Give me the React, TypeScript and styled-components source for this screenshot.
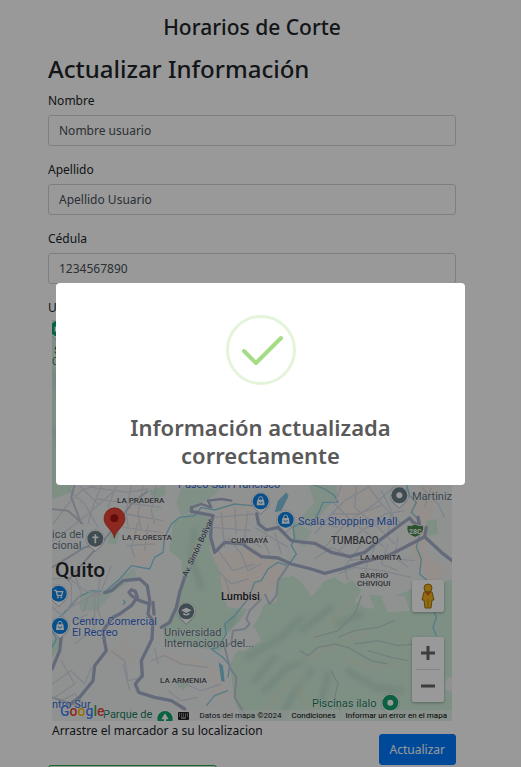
import React from 'react';
import styled, { createGlobalStyle } from 'styled-components';

const GlobalStyle = createGlobalStyle`
  *, *::before, *::after { box-sizing: border-box; }
  body {
    margin: 0;
    overflow: hidden;
    background: #fff;
    color: #212529;
    font-family: 'Noto Sans', 'Open Sans', sans-serif;
    font-size: 12px;
    line-height: 20px;
  }
`;

const Page = styled.main`
  height: 100vh;
  overflow: hidden;
  padding: 12px 66px 0 48px;
`;

const SiteTitle = styled.h1`
  margin: 0;
  font-size: 21px;
  font-weight: 500;
  line-height: 30px;
  text-align: center;
`;

const FormTitle = styled.h2`
  margin: 11px 0 6px;
  font-size: 24px;
  font-weight: 500;
  line-height: 32px;
`;

const Field = styled.div`
  display: flex;
  flex-direction: column;
  gap: 4px;
  margin-bottom: 14px;
`;

const TextInput = styled.input`
  width: 100%;
  height: 31px;
  padding: 4px 10px;
  border: 1px solid #ced4da;
  border-radius: 3px;
  background: #fff;
  color: #495057;
  font: inherit;
`;

const MapBlock = styled.section`
  display: flex;
  flex-direction: column;
  gap: 2px;
`;

const MapFrame = styled.div`
  position: relative;
  height: 401px;
  margin: 0 4px;
  overflow: hidden;
  background: #f3f4f5;
  font-family: Roboto, sans-serif;
`;

const MapArt = styled.svg`
  display: block;
  width: 100%;
  height: 100%;
`;

type Tone = 'area' | 'city' | 'shop' | 'place' | 'park' | 'road';
const tones: Record<Tone, string> = {
  area: '#4b4f55',
  city: '#26282c',
  shop: '#3068cf',
  place: '#5c7480',
  park: '#137a55',
  road: '#4d5870',
};

const MapLabel = styled.span<{ $x: number; $y: number; $size: number; $tone: Tone; $bold?: boolean; $angle?: number }>`
  position: absolute;
  left: ${(p) => p.$x}px;
  top: ${(p) => p.$y}px;
  color: ${(p) => tones[p.$tone]};
  font-size: ${(p) => p.$size}px;
  font-weight: ${(p) => (p.$bold ? 500 : 400)};
  line-height: 12px;
  margin-top: -6px;
  white-space: nowrap;
  text-shadow: 0 0 1px #fff, 0 0 2px #fff;
  ${(p) => (p.$angle ? `transform: rotate(${p.$angle}deg);` : '')}
`;

const MapControls = styled.div`
  position: absolute;
  right: 8px;
  bottom: 19px;
  display: flex;
  flex-direction: column;
  gap: 25px;
`;

const ControlGroup = styled.div`
  display: flex;
  flex-direction: column;
  width: 32px;
  border-radius: 2px;
  background: #fff;
  box-shadow: 0 1px 3px rgba(0, 0, 0, 0.3);
`;

const MapButton = styled.button`
  display: flex;
  align-items: center;
  justify-content: center;
  height: 32px;
  padding: 0;
  border: 0;
  background: none;
`;

const Divider = styled.hr`
  width: 24px;
  height: 1px;
  margin: 0 auto;
  border: 0;
  background: #ddd;
`;

const GoogleLogo = styled.div`
  position: absolute;
  left: 8px;
  bottom: 0;
  font-size: 14px;
  font-weight: 500;
  line-height: 20px;
  text-shadow: 0 0 1px #fff, 0 0 2px #fff;
`;

const Letter = styled.span<{ $color: string }>`
  color: ${(p) => p.$color};
`;

const Attribution = styled.div`
  position: absolute;
  right: 0;
  bottom: 0;
  display: flex;
  align-items: center;
  height: 11px;
  padding: 0 5px 0 1px;
  gap: 10px;
  background: rgba(245, 245, 245, 0.5);
  font-size: 8px;
  line-height: 11px;
  white-space: nowrap;
`;

const AttributionLink = styled.a`
  color: #000;
  text-decoration: none;
`;

const KeyboardButton = styled.button`
  display: flex;
  padding: 0;
  border: 0;
  background: none;
`;

const FormFooter = styled.div`
  display: flex;
  align-items: flex-start;
  justify-content: space-between;
  padding-left: 4px;
`;

const SubmitButton = styled.button`
  height: 31px;
  margin-top: 13px;
  padding: 0 10px;
  border: 1px solid #007bff;
  border-radius: 3px;
  background: #007bff;
  color: #fff;
  font: inherit;
`;

const OutlineButton = styled.button`
  display: block;
  width: 169px;
  height: 31px;
  border: 1px solid #28a745;
  border-radius: 3px;
  background: transparent;
`;

const Backdrop = styled.div`
  position: fixed;
  inset: 0 1px 0 0;
  display: flex;
  align-items: center;
  justify-content: center;
  padding: 0 56px;
  background: rgba(0, 0, 0, 0.4);
`;

const Dialog = styled.div`
  display: flex;
  flex: 1;
  flex-direction: column;
  align-items: center;
  max-width: 478px;
  padding: 32px 20px 16px;
  border-radius: 4px;
  background: #fff;
`;

const SuccessIcon = styled.svg`
  width: 70px;
  height: 70px;
`;

const DialogTitle = styled.h2`
  margin: 28px 0 0;
  max-width: 300px;
  color: #595959;
  font-size: 22px;
  font-weight: 600;
  line-height: 28px;
  text-align: center;
`;

const labels: { t: string; x: number; y: number; s: number; tone: Tone; bold?: boolean; angle?: number }[] = [
  { t: 'S', x: 2, y: 31, s: 11, tone: 'park', bold: true },
  { t: 'C', x: 0, y: 42, s: 10, tone: 'park' },
  { t: 'Paseo San Francisco', x: 126, y: 165, s: 11, tone: 'shop' },
  { t: 'LA PRADERA', x: 65, y: 181, s: 8, tone: 'area', bold: true },
  { t: 'LA FLORESTA', x: 70, y: 218, s: 8, tone: 'area', bold: true },
  { t: 'ica del', x: 0, y: 215, s: 11, tone: 'place' },
  { t: 'cional', x: 0, y: 226, s: 11, tone: 'place' },
  { t: 'Quito', x: 3, y: 250, s: 21, tone: 'city', bold: true },
  { t: 'Centro Comercial', x: 20, y: 302, s: 11, tone: 'shop' },
  { t: 'El Recreo', x: 20, y: 313, s: 11, tone: 'shop' },
  { t: 'Universidad', x: 112, y: 313, s: 11, tone: 'place' },
  { t: 'Internacional del...', x: 112, y: 324, s: 11, tone: 'place' },
  { t: 'LA ARMENIA', x: 108, y: 361, s: 8, tone: 'area', bold: true },
  { t: 'ntro Sur', x: 0, y: 385, s: 11, tone: 'shop' },
  { t: 'Parque de', x: 51, y: 395, s: 11, tone: 'park' },
  { t: 'Lumbisi', x: 169, y: 277, s: 11, tone: 'city', bold: true },
  { t: 'CUMBAYÁ', x: 179, y: 221, s: 8, tone: 'area', bold: true },
  { t: 'Av. Simón Bolívar', x: 115, y: 228, s: 8, tone: 'road', bold: true, angle: -65 },
  { t: 'Martiniz', x: 360, y: 177, s: 11, tone: 'place' },
  { t: 'Scala Shopping Mall', x: 246, y: 202, s: 11, tone: 'shop' },
  { t: 'TUMBACO', x: 279, y: 221, s: 10, tone: 'area', bold: true },
  { t: 'LA MORITA', x: 308, y: 238, s: 8, tone: 'area', bold: true },
  { t: 'BARRIO', x: 308, y: 256, s: 8, tone: 'area', bold: true },
  { t: 'CHIVIQUI', x: 305, y: 264, s: 8, tone: 'area', bold: true },
  { t: 'Piscinas ilalo', x: 260, y: 384, s: 11, tone: 'park' },
];

const Pin = ({ x, y, color, children }: { x: number; y: number; color: string; children?: React.ReactNode }) => (
  <g transform={`translate(${x} ${y})`}>
    <path d="M-29 0A29 29 0 1 1 29 0C29 18 12 26 0 40C-12 26 -29 18 -29 0Z" fill="#8d9aa2" opacity=".45" />
    <path d="M-27 -1A27 27 0 1 1 27 -1C27 16 10 24 0 36C-10 24 -27 16 -27 -1Z" fill="#fff" />
    <circle r="24" cy="-1" fill={color} />
    {children}
  </g>
);

const Bag = () => (
  <g>
    <path d="M-10 -6H10L12 11H-12Z" fill="#fff" />
    <path d="M-6 -5V-9A6 6 0 0 1 6 -9V-5" fill="none" stroke="#fff" strokeWidth="3" />
    <path d="M-5 0A5 5 0 0 0 5 0" fill="none" stroke="#0a84e8" strokeWidth="2.5" />
  </g>
);

const MapDrawing = () => (
  <MapArt viewBox="12 -492 1200 1203" preserveAspectRatio="xMinYMin slice" aria-hidden="true">
    <defs>
      <filter id="relief" x="-20%" y="-20%" width="140%" height="140%">
        <feGaussianBlur stdDeviation="8" />
      </filter>
    </defs>
    <rect x="12" y="-492" width="1200" height="1203" fill="#f1f3f4" />

    {/* built-up ground */}
    <g fill="#f8eee8">
      <path d="M240 70L290 60 320 100 360 90 350 170 300 240 250 245 260 190 230 130Z" opacity=".7" />
      <path d="M500 210L620 190 700 240 690 290 640 350 560 370 520 330Z" />
      <path d="M510 60L600 50 620 100 570 140 510 130Z" opacity=".7" />
      <path d="M880 5L990 10 1000 80 930 130 860 100Z" opacity=".6" />
      <path d="M1080 60L1130 0 1170 0 1150 120 1130 210 1200 260 1150 300 1100 230Z" />
      <path d="M350 505L440 520 520 560 540 660 500 640 470 560 380 540Z" opacity=".6" />
      <path d="M180 500L230 460 270 520 240 560Z" opacity=".4" />
    </g>

    {/* vegetation */}
    <g fill="#d2efdd">
      <path d="M12 -492H70V25L12 45Z" />
      <path d="M375 115L440 80 488 105 486 200 515 260 524 340 540 370 600 375 575 410 535 450 520 500 440 490 350 470 345 435 375 380 405 300 400 230 365 200Z" />
      <path d="M545 540L585 470 630 405 650 360 685 355 690 285 735 275 765 300 790 340 830 290 860 280 890 300 915 290 950 330 1030 340 1080 320 1120 300 1150 310 1212 285V711H585L560 650Z" />
      <path d="M400 10L520 0 510 25 440 75 400 100 385 60Z" opacity=".8" />
      <path d="M300 20L350 5 355 30 320 50Z" />
      <path d="M780 0L865 5 870 40 830 80 790 125 760 100 800 55Z" opacity=".8" />
      <path d="M735 110L790 140 770 190 735 170Z" opacity=".7" />
      <path d="M95 330L165 320 240 265 260 250 265 280 190 330 150 380 95 380Z" opacity=".7" />
      <path d="M12 470L35 455 28 500 12 520Z" />
      <path d="M185 142L215 145 205 180 180 178Z" />
      <path d="M385 600L405 585 425 600 405 620Z" />
      <path d="M1135 110L1165 105 1170 150 1140 155Z" />
    </g>
    <g fill="#f1f3f4">
      <path d="M940 320L965 335 980 375 950 370 920 350Z" />
      <path d="M1000 340L1070 335 1085 380 1020 385Z" />
      <path d="M545 440L620 430 640 470 590 500 555 500Z" />
      <path d="M1195 585L1212 580V625L1190 615Z" />
    </g>
    <g filter="url(#relief)" fill="none" strokeLinecap="round">
      <g stroke="#b4d8c5" strokeWidth="16" opacity=".6">
        <path d="M18 -330L40 -250M20 -160L50 -90M600 520L700 460 760 400M650 620L720 550 770 530M790 560L730 640 700 700M840 570L820 650M760 440L850 370M620 590L680 520" />
        <path d="M900 560L980 610 1060 620M870 420L940 390M440 140L430 220 460 310M560 400L540 430" />
      </g>
      <g stroke="#dcebd2" strokeWidth="14" opacity=".8">
        <path d="M20 -400L50 -300M800 460L860 410 910 340M760 530L830 500 880 480 960 440M750 570L680 640 640 700M770 570L760 640 800 690M880 520L960 550 1040 540M440 180L450 240M1020 450L1120 480" />
      </g>
    </g>

    {/* water */}
    <g fill="none" stroke="#8ccfe0" strokeWidth="4" strokeLinejoin="round">
      <path d="M12 490L25 465 12 440M35 400L60 375 90 340 130 320 160 322M175 320L215 285 250 245 305 255 320 220 345 205 350 160 370 120 395 100 440 95 460 70 500 78 560 60 610 65 640 40" />
      <path d="M790 0L830 15 860 35 870 55 825 55 815 80 790 125 760 115 735 130 740 160 730 185 745 210 720 245 690 235 660 255 640 290 620 295 600 345 560 395 530 420 535 450 510 490 490 495 525 520 545 545 540 580" />
      <path d="M1075 0L1085 35 1105 55 1090 85 1110 105M1115 150L1105 190 1120 225 1115 270 1150 300 1155 375 1165 400 1155 430 1165 455" />
      <path d="M475 665L500 635 540 620M225 348L232 355 225 362" />
    </g>
    <path d="M715 25L722 35 700 80 680 85 690 50Z" fill="#80c7e0" />
    <path d="M512 535L525 545 530 595 520 590Z" fill="#80c7e0" />

    {/* minor streets */}
    <g fill="none" stroke="#d7dde6" strokeWidth="4" strokeLinejoin="round">
      <path d="M15 120L60 60 100 20 140 5M12 170L70 130 120 90 200 20M60 15L110 60 150 130M95 5L150 60M130 10L240 25 300 15M145 45L260 60 340 70M160 5L130 80 120 120M205 5L180 70M250 5L235 80 240 130M285 5L270 90 280 140M325 5L310 80 320 120M235 90L345 110M225 130L340 145M235 185L320 180M270 115L250 190 260 220M300 120L290 200" />
      <path d="M500 100L620 90M495 130L610 140M520 85L530 190M560 70L565 150M600 80L590 160 640 190M620 130L720 190M510 200L555 260 620 240M540 160L580 210 600 260 640 240M640 155L665 210M680 145L700 210M510 260L550 300 600 285M530 280L545 330" />
      <path d="M800 150L850 90 890 50 960 10M830 190L890 120 980 60 1040 5M860 210L930 150 1010 90 1070 80M880 5L860 60 910 110 960 150 1010 190M925 5L920 70 990 130 1040 180M960 5L1000 60 1060 120M850 90L930 90 1000 65M800 225L850 190 900 215M870 130L830 120M940 180L890 250 900 290M980 190L950 260 990 290M1020 180L1000 240 1050 260M1050 160L1040 220 1080 250M900 230L980 220 1100 230M870 270L920 250 1000 260 1090 280M1000 20L1030 80 1020 150M1120 10L1170 60 1190 100M1150 10L1130 70" />
      <path d="M12 285L60 280 110 320 160 330M30 260L70 300 70 360M80 270L100 330 60 380M105 385L120 340M12 370L50 400M50 380L140 330 140 430 80 480M155 280L150 380 180 450M190 245L160 320M120 390L80 410M190 500L230 530 240 590 290 580M12 600L70 560 110 600 130 550M40 530L80 600 20 640M120 670L80 630 30 655M245 620L225 540M310 530L350 515 400 540 480 550M320 490L330 540M360 620L400 650 450 640M250 670L240 711M520 600L460 620 410 600" />
      <path d="M755 500L780 515 810 490 860 480 900 490 970 530 1020 540M870 460L920 440 990 430 1040 410M800 460L870 440 920 390 940 335M920 480L990 470 1050 485 1100 480M960 500L1030 520 1080 530M850 560L870 600 860 640 880 690" stroke="#bfd5d0" />
    </g>

    {/* secondary roads */}
    <g fill="none" stroke="#c3cad8" strokeWidth="6" strokeLinejoin="round">
      <path d="M12 250L70 215 110 190 160 180 205 120 250 60 300 20M12 75L60 80 105 120M60 290L160 175M100 120L70 40 80 0M720 245L690 290 685 335 665 360 650 330M640 345L605 380 595 405 605 420 590 435 555 440 550 475 530 490 545 550 565 580 560 640 590 690M12 640L60 655 110 670" />
    </g>

    {/* highways */}
    <g fill="none" stroke="#a7b1cb" strokeWidth="10" strokeLinejoin="round" strokeLinecap="round">
      <path d="M170 326L190 320 225 290 275 285 298 305 305 350 300 390 315 410 312 465 280 530 283 575 262 600 272 625 320 640 370 650 410 675" />
      <path d="M305 360L275 350 250 335 243 325 250 317 262 322 268 340 250 365 215 390 195 400 165 440 170 475 175 500 140 545 135 590 95 640 60 665" />
      <path d="M315 355L318 390M42 440L35 500 12 555M340 430L365 415 385 370 395 325 410 280" />
      <path d="M430 70L430 82 495 95 490 115 488 160 500 205 530 175 590 180" />
      <path d="M430 70L460 60 490 70 480 50 520 45 550 50" strokeWidth="7" />
      <path d="M590 185L640 218 690 222 730 240 790 255 830 268 880 255 940 235" />
      <path d="M626 90L632 120 655 138 690 130 730 170 770 175 800 178 850 205 905 218 950 205 1000 165 1060 120 1085 102 1095 115 1115 125 1110 100" />
      <path d="M940 235L1020 215 1070 190 1130 158 1180 205 1225 240M1130 158L1135 130" />
    </g>

    <Pin x={30} y={-465} color="#12a36d"><path d="M-10 -7H8V8H-10Z" fill="#fff" /></Pin>
    <Pin x={638} y={53} color="#0a84e8"><Bag /></Pin>
    <Pin x={713} y={108} color="#0a84e8"><Bag /></Pin>
    <Pin x={36} y={427} color="#0a84e8"><Bag /></Pin>
    <Pin x={32} y={330} color="#0a84e8">
      <path d="M-14 -11H-8L-4 4H9L12 -7H-7" fill="none" stroke="#fff" strokeWidth="4" />
      <circle cx="-2" cy="10" r="3" fill="#fff" /><circle cx="8" cy="10" r="3" fill="#fff" />
    </Pin>
    <Pin x={142} y={165} color="#6a7f89"><path d="M0 -14V13M-9 -5H9" stroke="#fff" strokeWidth="5" /></Pin>
    <Pin x={415} y={383} color="#6a7f89">
      <path d="M-16 -4L0 -12 16 -4 0 4Z" fill="#fff" /><path d="M-9 3V9Q0 14 9 9V3L0 8Z" fill="#fff" />
    </Pin>
    <Pin x={1054} y={35} color="#6a7f89"><circle r="9" cy="-1" fill="#fff" /></Pin>
    <Pin x={1027} y={657} color="#12a36d"><circle r="9" cy="-1" fill="#fff" /></Pin>
    <g transform="translate(351 704)">
      <circle r="26" fill="#fff" /><circle r="23" fill="#12a36d" />
      <path d="M0 -16L11 2H-11ZM-3 0H3V12H-3Z" fill="#fff" />
    </g>

    {/* route shield */}
    <path d="M1078 124Q1090 128 1101 120Q1112 128 1126 124Q1132 150 1101 160Q1071 150 1078 124Z" fill="#48894b" stroke="#fff" strokeWidth="2" />
    <text x="1102" y="150" textAnchor="middle" fill="#fff" fontSize="21" fontWeight="700">28C</text>

    {/* dropped marker */}
    <path d="M199 162C196 138 168 128 168 103A31 31 0 0 1 231 103C231 128 203 138 199 162Z" fill="#ea4335" stroke="#b92b20" strokeWidth="2" />
    <circle cx="199" cy="103" r="12" fill="#a51712" />
  </MapArt>
);

const Pegman = () => (
  <svg width="16" height="26" viewBox="0 0 16 26" aria-hidden="true">
    <path d="M4 9Q8 7 12 9L14 17H12L11 25H5L4 17H2Z" fill="#f5b51e" stroke="#9b7414" />
    <path d="M5 9H11L8 13Z" fill="#dd5d17" />
    <path d="M8 16V24" stroke="#bd8515" />
    <circle cx="8" cy="5" r="4" fill="#f5b51e" stroke="#9b7414" />
  </svg>
);

const ZoomGlyph = ({ plus }: { plus?: boolean }) => (
  <svg width="16" height="16" viewBox="0 0 16 16" aria-hidden="true">
    <path d={plus ? 'M1 8H15M8 1V15' : 'M1 8H15'} stroke="#666" strokeWidth="3" />
  </svg>
);

const KeyboardGlyph = () => (
  <svg width="11" height="8" viewBox="0 0 11 8" aria-hidden="true">
    <rect width="11" height="8" rx="1" fill="#222" />
    <path d="M1 2H10M1 4H10" stroke="#ddd" strokeDasharray="1 1" />
    <path d="M3 6H8" stroke="#ddd" />
  </svg>
);

const fields = [
  { id: 'nombre', label: 'Nombre', value: 'Nombre usuario' },
  { id: 'apellido', label: 'Apellido', value: 'Apellido Usuario' },
  { id: 'cedula', label: 'Cédula', value: '1234567890' },
];

const brand: [string, string][] = [
  ['G', '#4285f4'], ['o', '#ea4335'], ['o', '#fbbc05'], ['g', '#4285f4'], ['l', '#34a853'], ['e', '#ea4335'],
];

export default function App() {
  return (
    <>
      <GlobalStyle />
      <Page>
        <SiteTitle>Horarios de Corte</SiteTitle>
        <form>
          <FormTitle>Actualizar Información</FormTitle>
          {fields.map((f) => (
            <Field key={f.id}>
              <label htmlFor={f.id}>{f.label}</label>
              <TextInput id={f.id} type="text" defaultValue={f.value} />
            </Field>
          ))}
          <MapBlock>
            <span>Ubicación</span>
            <MapFrame>
              <MapDrawing />
              {labels.map((l) => (
                <MapLabel key={l.t} $x={l.x} $y={l.y} $size={l.s} $tone={l.tone} $bold={l.bold} $angle={l.angle}>
                  {l.t}
                </MapLabel>
              ))}
              <MapControls>
                <ControlGroup>
                  <MapButton type="button" aria-label="Street View"><Pegman /></MapButton>
                </ControlGroup>
                <ControlGroup>
                  <MapButton type="button" aria-label="Acercar"><ZoomGlyph plus /></MapButton>
                  <Divider />
                  <MapButton type="button" aria-label="Alejar"><ZoomGlyph /></MapButton>
                </ControlGroup>
              </MapControls>
              <GoogleLogo>
                {brand.map(([c, color], i) => <Letter key={i} $color={color}>{c}</Letter>)}
              </GoogleLogo>
              <Attribution>
                <KeyboardButton type="button" aria-label="Combinaciones de teclas"><KeyboardGlyph /></KeyboardButton>
                <span>Datos del mapa ©2024</span>
                <AttributionLink href="#condiciones">Condiciones</AttributionLink>
                <AttributionLink href="#informar">Informar un error en el mapa</AttributionLink>
              </Attribution>
            </MapFrame>
          </MapBlock>
          <FormFooter>
            <span>Arrastre el marcador a su localizacion</span>
            <SubmitButton type="submit">Actualizar</SubmitButton>
          </FormFooter>
          <OutlineButton type="button" aria-label="Volver" />
        </form>
      </Page>
      <Backdrop>
        <Dialog role="dialog" aria-modal="true" aria-labelledby="dialog-title">
          <SuccessIcon viewBox="0 0 70 70" aria-hidden="true">
            <circle cx="35" cy="35" r="33.5" fill="none" stroke="#a5dc86" strokeOpacity=".3" strokeWidth="3" />
            <path d="M18 36L30 48L55 23" fill="none" stroke="#a5dc86" strokeWidth="4" strokeLinecap="round" strokeLinejoin="round" />
          </SuccessIcon>
          <DialogTitle id="dialog-title">Información actualizada correctamente</DialogTitle>
        </Dialog>
      </Backdrop>
    </>
  );
}
